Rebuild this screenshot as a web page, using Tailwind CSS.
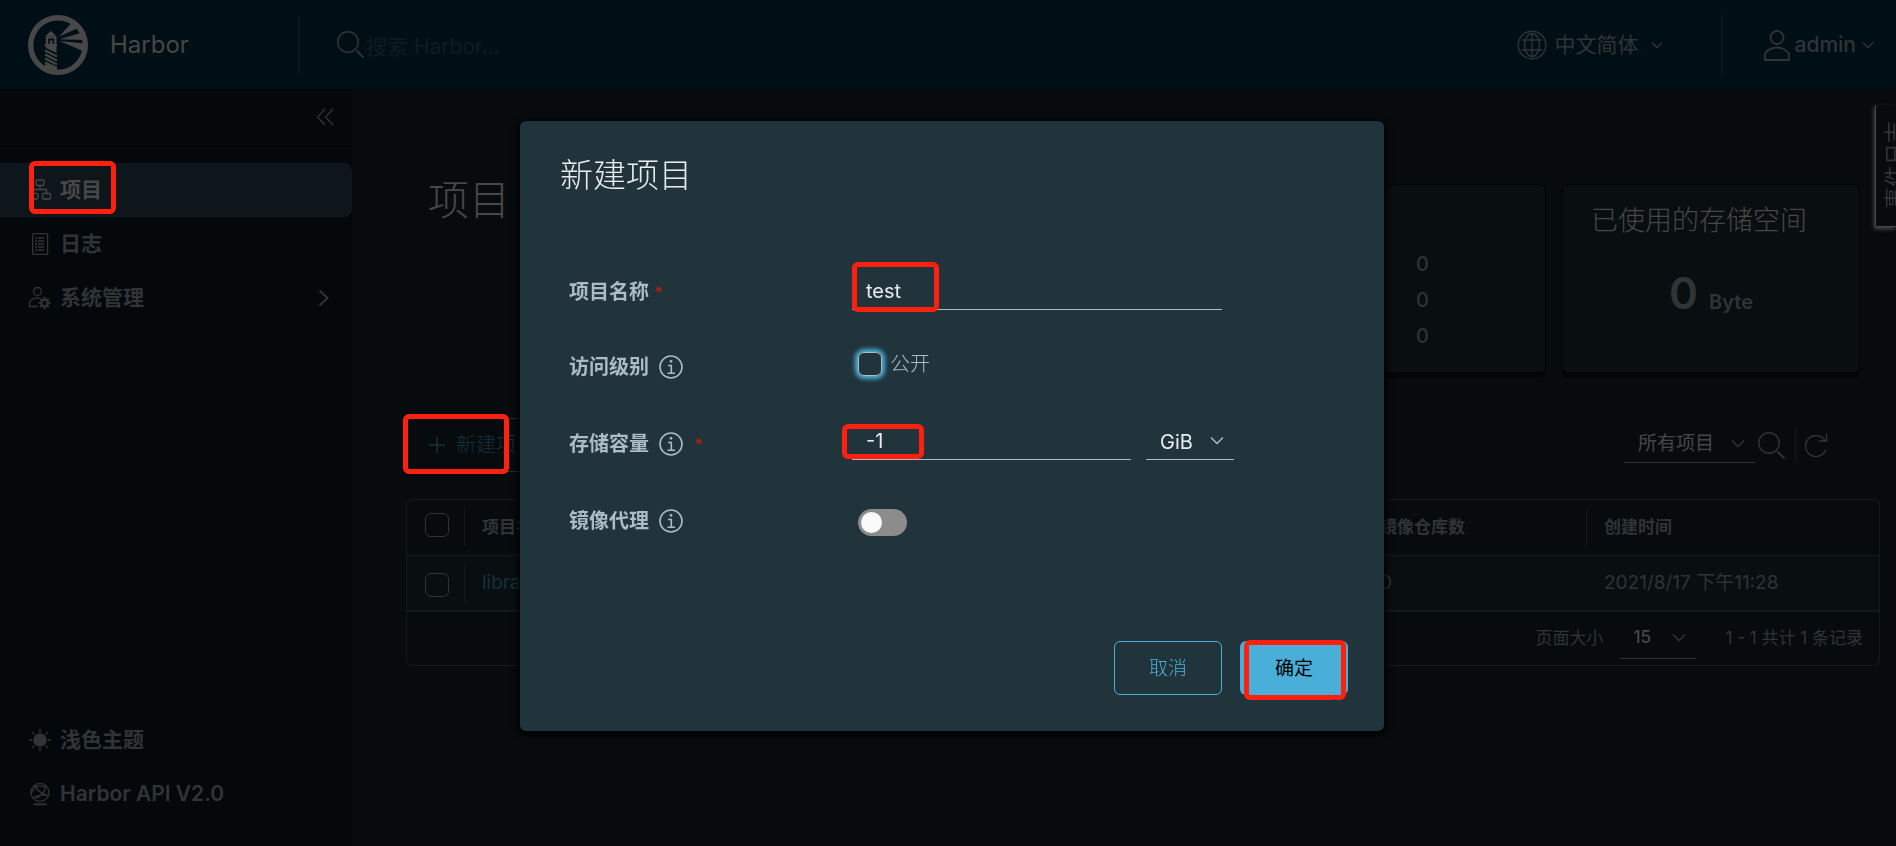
<!DOCTYPE html>
<html lang="zh-CN">
<head>
	<meta charset="UTF-8">
	<meta name="viewport" content="width=device-width, initial-scale=1.0">
	<script src="https://cdn.jsdelivr.net/npm/@tailwindcss/browser@4"></script>
	<title>Harbor</title>
</head>
<body class="flex min-h-screen flex-col overflow-hidden bg-[#070b0e] font-['Inter','Noto_Sans_CJK_SC',sans-serif] text-[#303437]">
	<!-- Header -->
	<header class="flex h-[89px] items-center bg-[#000f16]">
		<a href="#" class="flex w-[298px] items-center gap-[22px] pl-7 text-2xl text-[#474747]">
			<svg class="size-[60px]" viewBox="0 0 60 60" fill="none">
				<circle cx="30" cy="30" r="27.3" stroke="currentColor" stroke-width="5.4"/>
				<g fill="currentColor">
					<path d="M22.800 15.700 28.500 21.500H17.200z"/>
					<path d="M17.700 21.500h10.800V30H17.700zM20.200 23.500v5.500h1.600v-3.500h2.800v3.500h1.600v-5.500z" fill-rule="evenodd"/>
					<path d="M16.800 29h12.200v2.500h-.5V38L18 33v-1.500h-1.200z"/>
					<path d="M17 49 29 53v5.500L17 56z"/>
					<path d="M31 21.500 43.500 8 50.500 13z"/>
					<path d="M31.500 24.300 52.500 18 55 25z"/>
					<path d="M31.500 26 56 28.500 55 36z"/>
				</g>
				<path d="M17 35.500 29 41.500M17 39.500 29 45.500M17 43.500 29 49.500M17 47.500 29 53" stroke="currentColor" stroke-width="2"/>
			</svg>
			Harbor
		</a>
		<div class="h-[60px] w-[2px] bg-[#08171e]"></div>
		<label class="flex flex-1 items-center pl-9">
			<svg class="size-[30px] text-[#303437]" viewBox="0 0 30 30" fill="none" stroke="currentColor" stroke-width="1.500">
				<circle cx="12" cy="12" r="10.300"/>
				<path d="m20.500 20.500 7 7" stroke-width="2"/>
			</svg>
			<input type="text" aria-label="搜索" placeholder="搜索 Harbor..." class="w-60 bg-transparent pt-1 text-[21px] outline-none placeholder:text-[#101c22]">
		</label>
		<button class="flex items-center text-[21px]">
			<svg class="mr-2 size-[30px]" viewBox="0 0 30 30" fill="none" stroke="currentColor" stroke-width="1.400">
				<circle cx="15" cy="15" r="13.800"/>
				<ellipse cx="15" cy="15" rx="7.500" ry="11.500"/>
				<path d="M15 3.500v23M5 10h20M4.500 20h21"/>
			</svg>
			中文简体
			<svg class="ml-3 w-3" viewBox="0 0 12 8" fill="none" stroke="currentColor" stroke-width="1.400"><path d="m1 1.500 5 5 5-5"/></svg>
		</button>
		<div class="ml-[58px] h-[60px] w-[2px] bg-[#08171e]"></div>
		<button class="ml-10 mr-[22px] flex items-center text-[21px] font-medium">
			<svg class="mr-1 h-8 w-7" viewBox="0 0 28 32" fill="none" stroke="currentColor" stroke-width="1.800">
				<circle cx="14" cy="8.500" r="6.500"/>
				<path d="M2 31V24.500C5 20.500 9 18.500 14 18.500S23 20.500 26 24.500V31z"/>
			</svg>
			admin
			<svg class="ml-1.5 w-3" viewBox="0 0 12 8" fill="none" stroke="currentColor" stroke-width="1.400"><path d="m1 1.500 5 5 5-5"/></svg>
		</button>
	</header>

	<div class="flex flex-1">
		<!-- Sidebar -->
		<nav class="flex w-[352px] shrink-0 flex-col bg-[#04080b] text-[21px] font-bold">
			<div class="flex h-14 items-center justify-end border-b border-[#080c0f] pr-[18px]">
				<button aria-label="收起">
					<svg class="size-[18px]" viewBox="0 0 18 18" fill="none" stroke="currentColor" stroke-width="1.300"><path d="M9 1 1.500 9 9 17M17 1 9.500 9l7.500 8"/></svg>
				</button>
			</div>
			<a href="#" class="relative mt-[18px] flex h-[54px] items-center gap-2 rounded-r-lg bg-[#0e151b] pl-7 text-[#474747]">
				<svg class="size-6" viewBox="0 0 24 24" fill="none" stroke="currentColor" stroke-width="1.300">
					<rect x="8" y="2" width="8" height="5.500" rx="1"/>
					<rect x="2" y="15.500" width="8" height="5.500" rx="1"/>
					<rect x="14.500" y="15.500" width="8" height="5.500" rx="1"/>
					<path d="M12 7.500v4M5.500 15v-3.500h13V15"/>
				</svg>
				项目
				<span class="absolute left-[29px] -top-0.5 h-[53px] w-[87px] rounded-md border-5 border-[#ff2010]"></span>
			</a>
			<a href="#" class="flex h-[54px] items-center gap-2 pl-7">
				<svg class="size-6" viewBox="0 0 24 24" fill="none" stroke="currentColor" stroke-width="1.300">
					<rect x="4.600" y="1.600" width="15" height="20.800" rx="1"/>
					<path d="M7 6h2M7 9h2M7 12h2M7 15h2M7 18h2M10 6h6M10 9h6M10 12h6M10 15h6M10 18h6"/>
				</svg>
				日志
			</a>
			<a href="#" class="flex h-[54px] items-center gap-2 pl-7 pr-[22px]">
				<svg class="size-6" viewBox="0 0 24 24" fill="none" stroke="currentColor" stroke-width="1.300">
					<circle cx="9.500" cy="5.500" r="4"/>
					<path d="M12 12.500c-4.500-1.500-9 .500-10.500 4V20.500H10"/>
					<circle cx="16.500" cy="17" r="3.300" stroke-width="2.200"/>
					<path d="M16.500 11v2M16.500 21v2M10.500 17h2M20.500 17h2M12.300 12.800l1.500 1.500M19.200 19.700l1.500 1.500M12.300 21.200l1.500-1.500M19.200 14.300l1.500-1.500" stroke-width="2.200"/>
				</svg>
				系统管理
				<svg class="ml-auto h-[18px] w-3" viewBox="0 0 12 18" fill="none" stroke="currentColor" stroke-width="2"><path d="m1.500 1.500 8 7.500-8 7.500"/></svg>
			</a>
			<div class="mt-auto pb-[25px]">
				<button class="flex h-[54px] items-center gap-2 pl-7">
					<svg class="size-6" viewBox="0 0 24 24" stroke="currentColor" stroke-width="1.600">
						<circle cx="12" cy="12" r="6" fill="currentColor"/>
						<path d="M12 1v3M12 20v3M1 12h3M20 12h3M4.200 4.200l2 2M17.800 17.800l2 2M4.200 19.800l2-2M17.800 6.200l2-2"/>
					</svg>
					浅色主题
				</button>
				<a href="#" class="flex h-[54px] items-center gap-2 pl-7 font-semibold">
					<svg class="size-6" viewBox="0 0 24 24" fill="none" stroke="currentColor" stroke-width="1.300">
						<circle cx="12" cy="10.500" r="9"/>
						<path d="M6 4.500c4-1 9 0 11.500 0M8 4.500c1 4 5 7 12.500 9.500M17.500 4.500C17 10 13 14.500 7.500 16.500M3 12c2-5 4-6 5-7M5 16c5-3 11-3.500 15-2.500"/>
						<path d="M5.500 22.300h13" stroke-width="2"/>
					</svg>
					Harbor API V2.0
				</a>
			</div>
		</nav>

		<!-- Projects -->
		<main class="flex-1 pl-[54px] pr-4">
			<div class="flex justify-between pl-[22px] pr-5 pt-[95px]">
				<h1 class="-mt-3 text-[41px]/[56px] font-light text-[#474747]">项目</h1>
				<div class="flex gap-4">
					<section class="flex h-[189px] w-[298px] flex-col items-end gap-0.5 rounded-md border border-[#020405] bg-[#090e10] pr-[116px] pt-[62px] text-xl/[34px] font-medium shadow-[0_5px_0_#030506]">
						<span>0</span>
						<span>0</span>
						<span>0</span>
					</section>
					<section class="h-[189px] w-[298px] rounded-md border border-[#020405] bg-[#090e10] px-7 pt-4 shadow-[0_5px_0_#030506]">
						<h2 class="text-[27px]/[40px] font-light text-[#474747]">已使用的存储空间</h2>
						<p class="mt-6 text-center text-[44px]/[56px] font-semibold">0 <span class="text-xl">Byte</span></p>
					</section>
				</div>
			</div>

			<div class="mt-[45px] flex h-[54px] items-center">
				<button class="relative flex h-[54px] w-[164px] items-center gap-2.5 rounded border border-[#14313d] pl-[21px] text-xl font-light text-[#14313d]">
					<svg class="size-[18px]" viewBox="0 0 18 18" stroke="currentColor" stroke-width="1.500"><path d="M9 1v16M1 9h16"/></svg>
					新建项目
					<span class="absolute -left-1 -top-[5px] h-[60px] w-[106px] rounded-md border-5 border-[#ff2010]"></span>
				</button>
				<div class="relative ml-auto">
					<select aria-label="项目筛选" class="h-9 w-[131px] appearance-none border-b border-[#303437] pl-3.5 text-[19px] text-[#474747] outline-none">
						<option>所有项目</option>
					</select>
					<svg class="absolute right-2.5 top-3 w-3.5" viewBox="0 0 14 9" fill="none" stroke="currentColor" stroke-width="1.500"><path d="m1 1.500 6 6 6-6"/></svg>
				</div>
				<button aria-label="搜索" class="ml-0.5">
					<svg class="size-[30px]" viewBox="0 0 30 30" fill="none" stroke="currentColor" stroke-width="1.400">
						<circle cx="12" cy="13" r="10.300"/>
						<path d="m20.500 21.500 7 7" stroke-width="2"/>
					</svg>
				</button>
				<div class="ml-2 mr-2 h-9 w-px bg-[#14191c]"></div>
				<button aria-label="刷新" class="mr-[52px]">
					<svg class="size-6" viewBox="0 0 24 24" fill="none" stroke="currentColor" stroke-width="1.400"><path d="M22 16.500A10.500 10.500 0 1 1 21 7.500M22.500 1v7H15"/></svg>
				</button>
			</div>

			<div class="mt-[27px] rounded-md border border-[#14191c]">
				<table class="w-full table-fixed text-left">
					<thead>
						<tr class="h-[55px] border-b border-[#14191c] text-[17px]">
							<th class="w-[57px] pl-[18px]"><input type="checkbox" aria-label="全选" class="-mt-1 block size-6 appearance-none rounded-md border border-[#303437]"></th>
							<th class="relative pl-[18px]"><span class="absolute left-0 top-[9px] h-[37px] w-px bg-[#14191c]"></span>项目名称</th>
							<th class="w-[224px] pl-[18px]">镜像仓库数</th>
							<th class="relative w-[293px] pl-[18px]"><span class="absolute left-0 top-[9px] h-[37px] w-px bg-[#14191c]"></span>创建时间</th>
						</tr>
					</thead>
					<tbody>
						<tr class="h-[56px] border-b-2 border-[#14191c] bg-[#090e10] text-[19px]">
							<td class="pl-[18px]"><input type="checkbox" aria-label="选择 library" class="mt-1 block size-6 appearance-none rounded-md border border-[#303437]"></td>
							<td class="relative pl-[18px]"><span class="absolute left-0 top-2 h-[38px] w-px bg-[#14191c]"></span><a href="#" class="text-[#14313d]">library</a></td>
							<td class="pl-[18px]">0</td>
							<td class="pl-[18px]">2021/8/17 下午11:28</td>
						</tr>
					</tbody>
				</table>
				<div class="flex h-[53px] items-center justify-end pr-4 text-[17px]">
					<label for="page-size" class="mr-4">页面大小</label>
					<div class="relative mr-[30px]">
						<select id="page-size" class="h-10 w-[76px] appearance-none border-b border-[#303437] pl-3.5 font-medium text-[#474747] outline-none">
							<option>15</option>
						</select>
						<svg class="absolute right-2.5 top-3.5 w-3.5" viewBox="0 0 14 9" fill="none" stroke="currentColor" stroke-width="1.500"><path d="m1 1.500 6 6 6-6"/></svg>
					</div>
					<span>1 - 1 共计 1 条记录</span>
				</div>
			</div>
		</main>
	</div>

	<!-- Event log tab -->
	<button class="fixed right-0 top-[105px] flex h-[122px] w-[21px] items-center overflow-hidden border-b border-l border-[#474747] bg-[#070b0e] pl-[7px] shadow-[-1px_2px_4px_#474747]">
		<span class="shrink-0 rotate-180 text-[22px]/[24px] [text-orientation:sideways] [writing-mode:vertical-rl]">事件日志</span>
	</button>

	<!-- Modal -->
	<div class="fixed inset-0 flex items-center justify-center pl-2 pt-1.5">
		<div role="dialog" aria-labelledby="modal-title" class="w-[864px] rounded-md bg-[#21333b] px-9 pb-9 pt-[34px] text-[#adbbc4] shadow-[0_2px_6px_2px_#000000]">
			<h3 id="modal-title" class="pl-1 text-[33px]/[40px] font-light text-[#e9ecef]">新建项目</h3>
			<form class="mt-14 px-3 text-xl">
				<div class="flex h-[77px] items-center">
					<label for="name" class="flex w-[284px] items-center pl-px pt-1 font-bold">项目名称<span class="ml-1.5 text-base font-normal text-[#c92100]">*</span></label>
					<div class="relative">
						<input id="name" type="text" value="test" class="h-10 w-[370px] border-b border-[#adbbc4] px-3.5 pt-1 text-[#e9ecef] outline-none">
						<span class="absolute left-0 -top-2 h-[50px] w-[87px] rounded-md border-5 border-[#ff2010]"></span>
					</div>
				</div>
				<div class="flex h-[77px] items-center">
					<div class="flex w-[284px] items-center gap-2.5 pl-px font-bold">
						访问级别
						<svg class="size-6" viewBox="0 0 24 24" fill="none" stroke="currentColor" stroke-width="1.600"><circle cx="12" cy="12" r="11"/><path d="M9 10.500h3.300V18M8.500 18.200h7.500"/><circle cx="12" cy="6.300" r="1" fill="currentColor" stroke-width="1"/></svg>
					</div>
					<label class="flex items-center gap-2 pb-1.5 pl-1.5 font-light">
						<input type="checkbox" class="size-6 appearance-none rounded-md border border-[#adbbc4] shadow-[0_0_4px_3px_#49afd9]">
						公开
					</label>
				</div>
				<div class="flex h-[77px] items-center">
					<label for="quota" class="flex w-[284px] items-center gap-2.5 pl-px font-bold">
						存储容量
						<svg class="size-6" viewBox="0 0 24 24" fill="none" stroke="currentColor" stroke-width="1.600"><circle cx="12" cy="12" r="11"/><path d="M9 10.500h3.300V18M8.500 18.200h7.500"/><circle cx="12" cy="6.300" r="1" fill="currentColor" stroke-width="1"/></svg>
						<span class="ml-0.5 text-base font-normal text-[#c92100]">*</span>
					</label>
					<div class="relative">
						<input id="quota" type="text" value="-1" class="h-8 w-[279px] border-b border-[#adbbc4] px-3.5 pb-1 text-[#e9ecef] outline-none">
						<span class="absolute -left-2.5 -top-[3px] h-[35px] w-[82px] rounded-md border-5 border-[#ff2010]"></span>
					</div>
					<div class="relative ml-[15px]">
						<select aria-label="单位" class="h-8 w-[88px] appearance-none border-b border-[#adbbc4] pb-1 pl-3.5 text-xl text-[#e9ecef] outline-none">
							<option>GiB</option>
						</select>
						<svg class="absolute right-2.5 top-2 w-3.5" viewBox="0 0 14 9" fill="none" stroke="currentColor" stroke-width="1.500"><path d="m1 1.500 6 6 6-6"/></svg>
					</div>
				</div>
				<div class="flex h-[77px] items-center">
					<label for="proxy" class="flex w-[284px] items-center gap-2.5 pl-px font-bold">
						镜像代理
						<svg class="size-6" viewBox="0 0 24 24" fill="none" stroke="currentColor" stroke-width="1.600"><circle cx="12" cy="12" r="11"/><path d="M9 10.500h3.300V18M8.500 18.200h7.500"/><circle cx="12" cy="6.300" r="1" fill="currentColor" stroke-width="1"/></svg>
					</label>
					<input id="proxy" type="checkbox" role="switch" class="ml-1.5 mt-1 h-[27px] w-[49px] appearance-none rounded-full bg-[#8c8c8c] p-[3px] before:block before:size-[21px] before:rounded-full before:bg-[#fafafa]">
				</div>
			</form>
			<div class="mt-[82px] flex justify-end gap-[18px] text-[19px]">
				<button class="h-[54px] w-[108px] rounded-md border border-[#49afd9] pt-0.5 font-light text-[#49afd9]">取消</button>
				<button class="relative h-[54px] w-[108px] rounded-md bg-[#49afd9] pt-0.5 text-black">
					确定
					<span class="absolute left-1 -top-px h-[60px] w-[102px] rounded-md border-5 border-[#ff2010]"></span>
				</button>
			</div>
		</div>
	</div>
</body>
</html>
